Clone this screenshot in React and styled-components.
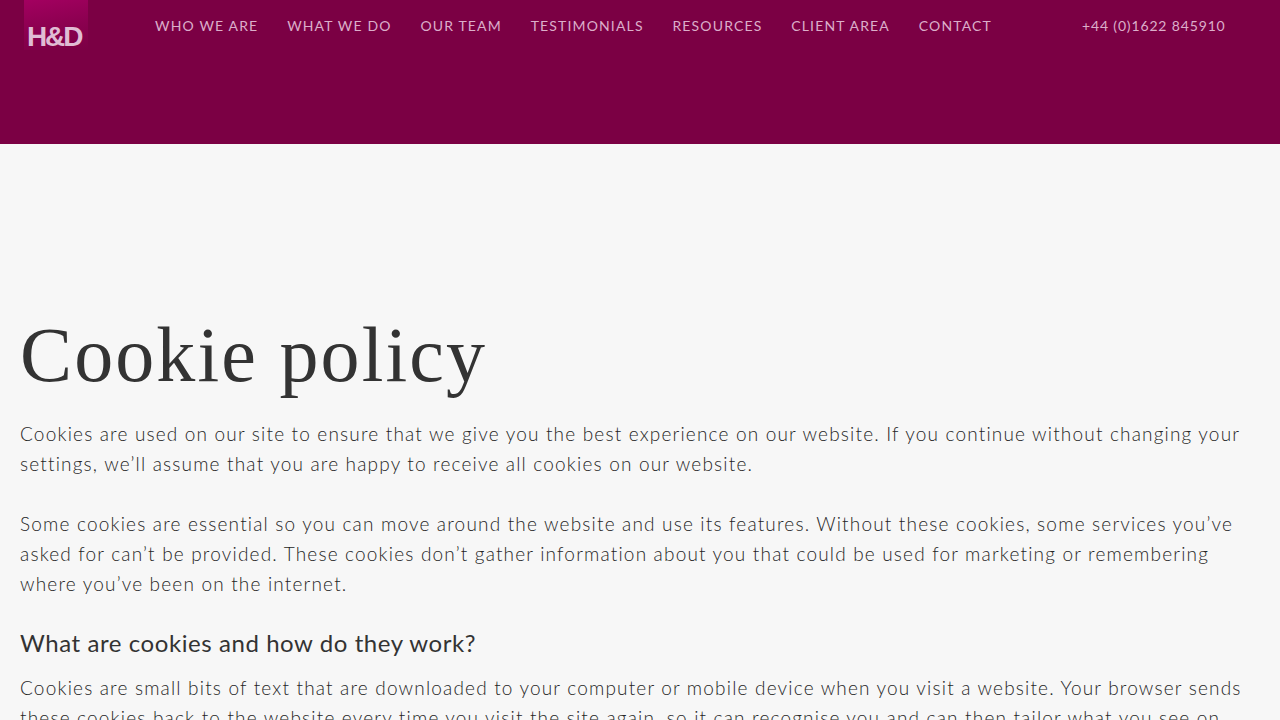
import React from "react";
import styled, { createGlobalStyle } from "styled-components";

const Global = createGlobalStyle`
  html, body { margin: 0; padding: 0; background: #f7f7f7; overflow: hidden; height: 720px; }
  body { font-family: "Lato", "Liberation Sans", sans-serif; color: #333; }
`;
const Header = styled.header`
  height: 144px; background: #7b0044; display: flex; align-items: flex-start;
  padding-left: 24px; box-sizing: border-box;
`;
const Logo = styled.div`
  width: 64px; height: 50px; flex: none; box-sizing: border-box; padding: 22px 0 0 3px;
  background: linear-gradient(170deg, #a30060 0%, #8a004f 55%, #7b0044 100%);
`;
const LogoText = styled.span`
  font-family: "Liberation Sans", sans-serif; font-weight: 700; font-size: 28px; line-height: 30px;
  letter-spacing: -2.1px; color: #e0bcd4; display: block;
`;
const Nav = styled.nav`
  display: flex; gap: 28.8px; margin-left: 67px; padding-top: 16px;
`;
const NavLink = styled.a`
  font-size: 14px; line-height: 20px; font-weight: 400; letter-spacing: 1.15px; color: #dcaeca; white-space: nowrap;
`;
const Phone = styled(NavLink)`
  margin-left: 90px; padding-top: 16px; letter-spacing: 0.85px;
`;
const Main = styled.main`
  padding: 169px 20px 0;
`;
const Title = styled.h1`
  margin: 0 0 22px; font-family: "Liberation Serif", serif; font-weight: 400; font-size: 78px;
  line-height: 84px; letter-spacing: 2.1px; color: #333;
`;
const Para = styled.p`
  margin: 0 0 30px; font-size: 19px; line-height: 30px; letter-spacing: 1.18px; font-weight: 300; color: #262626;
  white-space: pre-line;
`;
const Sub = styled.h2`
  margin: -4px 0 12px; font-size: 24px; line-height: 36px; font-weight: 400; letter-spacing: 0.57px; color: #333;
`;
const nav = ["WHO WE ARE","WHAT WE DO","OUR TEAM","TESTIMONIALS","RESOURCES","CLIENT AREA","CONTACT"];
export default function App() {
  return (
    <>
      <Global />
      <Header>
        <Logo><LogoText>H&amp;D</LogoText></Logo>
        <Nav>{nav.map(n => <NavLink key={n}>{n}</NavLink>)}</Nav>
        <Phone>+44 (0)1622 845910</Phone>
      </Header>
      <Main>
        <Title>Cookie policy</Title>
        <Para>{"Cookies are used on our site to ensure that we give you the best experience on our website. If you continue without changing your\nsettings, we’ll assume that you are happy to receive all cookies on our website."}</Para>
        <Para>{"Some cookies are essential so you can move around the website and use its features. Without these cookies, some services you’ve\nasked for can’t be provided. These cookies don’t gather information about you that could be used for marketing or remembering\nwhere you’ve been on the internet."}</Para>
        <Sub>What are cookies and how do they work?</Sub>
        <Para>{"Cookies are small bits of text that are downloaded to your computer or mobile device when you visit a website. Your browser sends\nthese cookies back to the website every time you visit the site again, so it can recognise you and can then tailor what you see on"}</Para>
      </Main>
    </>
  );
}
